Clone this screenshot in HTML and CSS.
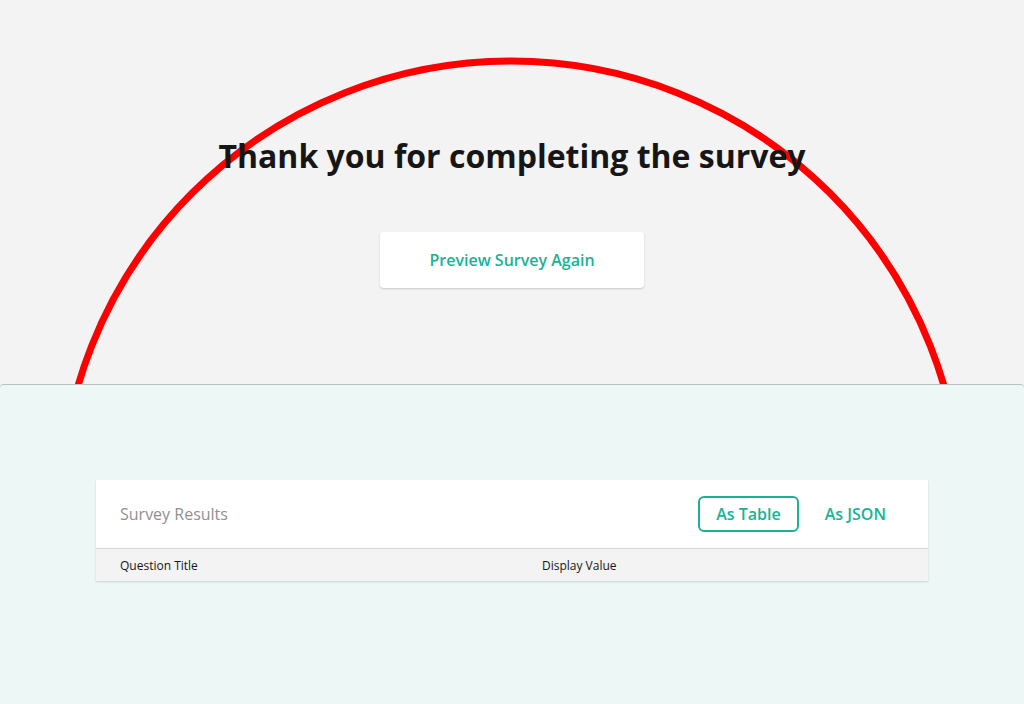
FILE: index.html
```html
<!DOCTYPE html>
<html>
<head>
<meta charset="utf-8">
<link rel="stylesheet" href="styles.css">
</head>
<body>
<div class="page">
  <svg class="ring" width="1024" height="704" viewBox="0 0 1024 704">
    <circle cx="511" cy="512" r="451" fill="none" stroke="#ff0000" stroke-width="7"/>
  </svg>
  <section class="complete">
    <h1 class="title">Thank you for completing the survey</h1>
    <button class="preview-btn">Preview Survey Again</button>
  </section>
  <section class="results-area">
    <div class="card">
      <div class="card-head">
        <span class="card-title">Survey Results</span>
        <div class="tabs">
          <button class="tab tab-active">As Table</button>
          <button class="tab">As JSON</button>
        </div>
      </div>
      <div class="table-head">
        <span class="col col-q">Question Title</span>
        <span class="col col-v">Display Value</span>
      </div>
    </div>
  </section>
</div>
</body>
</html>
```
FILE: styles.css
```css
* { box-sizing: border-box; }
html, body { margin: 0; padding: 0; }
body {
  font-family: "Open Sans", "Noto Sans", sans-serif;
  background: #f3f3f3;
  width: 1024px;
  height: 704px;
  overflow: hidden;
}
.page {
  position: relative;
  width: 1024px;
  height: 704px;
  display: flex;
  flex-direction: column;
}
.ring {
  position: absolute;
  left: 0;
  top: 0;
  z-index: 0;
}
.complete {
  position: relative;
  z-index: 1;
  height: 384px;
  display: flex;
  flex-direction: column;
  align-items: center;
  padding-top: 134px;
}
.title {
  margin: 0;
  font-size: 32px;
  font-weight: 700;
  line-height: 44px;
  color: #161616;
}
.preview-btn {
  margin-top: 54px;
  width: 264px;
  height: 56px;
  border: none;
  border-radius: 4px;
  background: #fff;
  box-shadow: 0 1px 2px rgba(0,0,0,0.18);
  font-family: inherit;
  font-size: 16px;
  font-weight: 600;
  color: #19b394;
}
.results-area {
  position: relative;
  z-index: 1;
  flex: 1;
  background: #edf7f5;
  border-top: 1px solid #b4c2bf;
  border-radius: 4px 4px 0 0;
  padding: 95px 96px 0;
}
.card {
  background: #fff;
  box-shadow: 0 1px 2px rgba(0,0,0,0.15);
}
.card-head {
  height: 68px;
  display: flex;
  align-items: center;
  justify-content: space-between;
  padding: 0 24px;
}
.card-title {
  font-size: 16px;
  font-weight: 400;
  color: #909090;
}
.tabs {
  display: flex;
  align-items: center;
  gap: 8px;
}
.tab {
  height: 36px;
  padding: 0 16px;
  border: 2px solid transparent;
  border-radius: 6px;
  background: transparent;
  font-family: inherit;
  font-size: 16px;
  font-weight: 600;
  color: #19b394;
}
.tab-active {
  border-color: #19b394;
}
.table-head {
  height: 33px;
  background: #f3f3f3;
  border-top: 1px solid #d6d6d6;
  display: grid;
  grid-template-columns: 422px 1fr;
  align-items: center;
  padding-left: 24px;
}
.col {
  font-size: 12px;
  font-weight: 400;
  color: #161616;
}
```
